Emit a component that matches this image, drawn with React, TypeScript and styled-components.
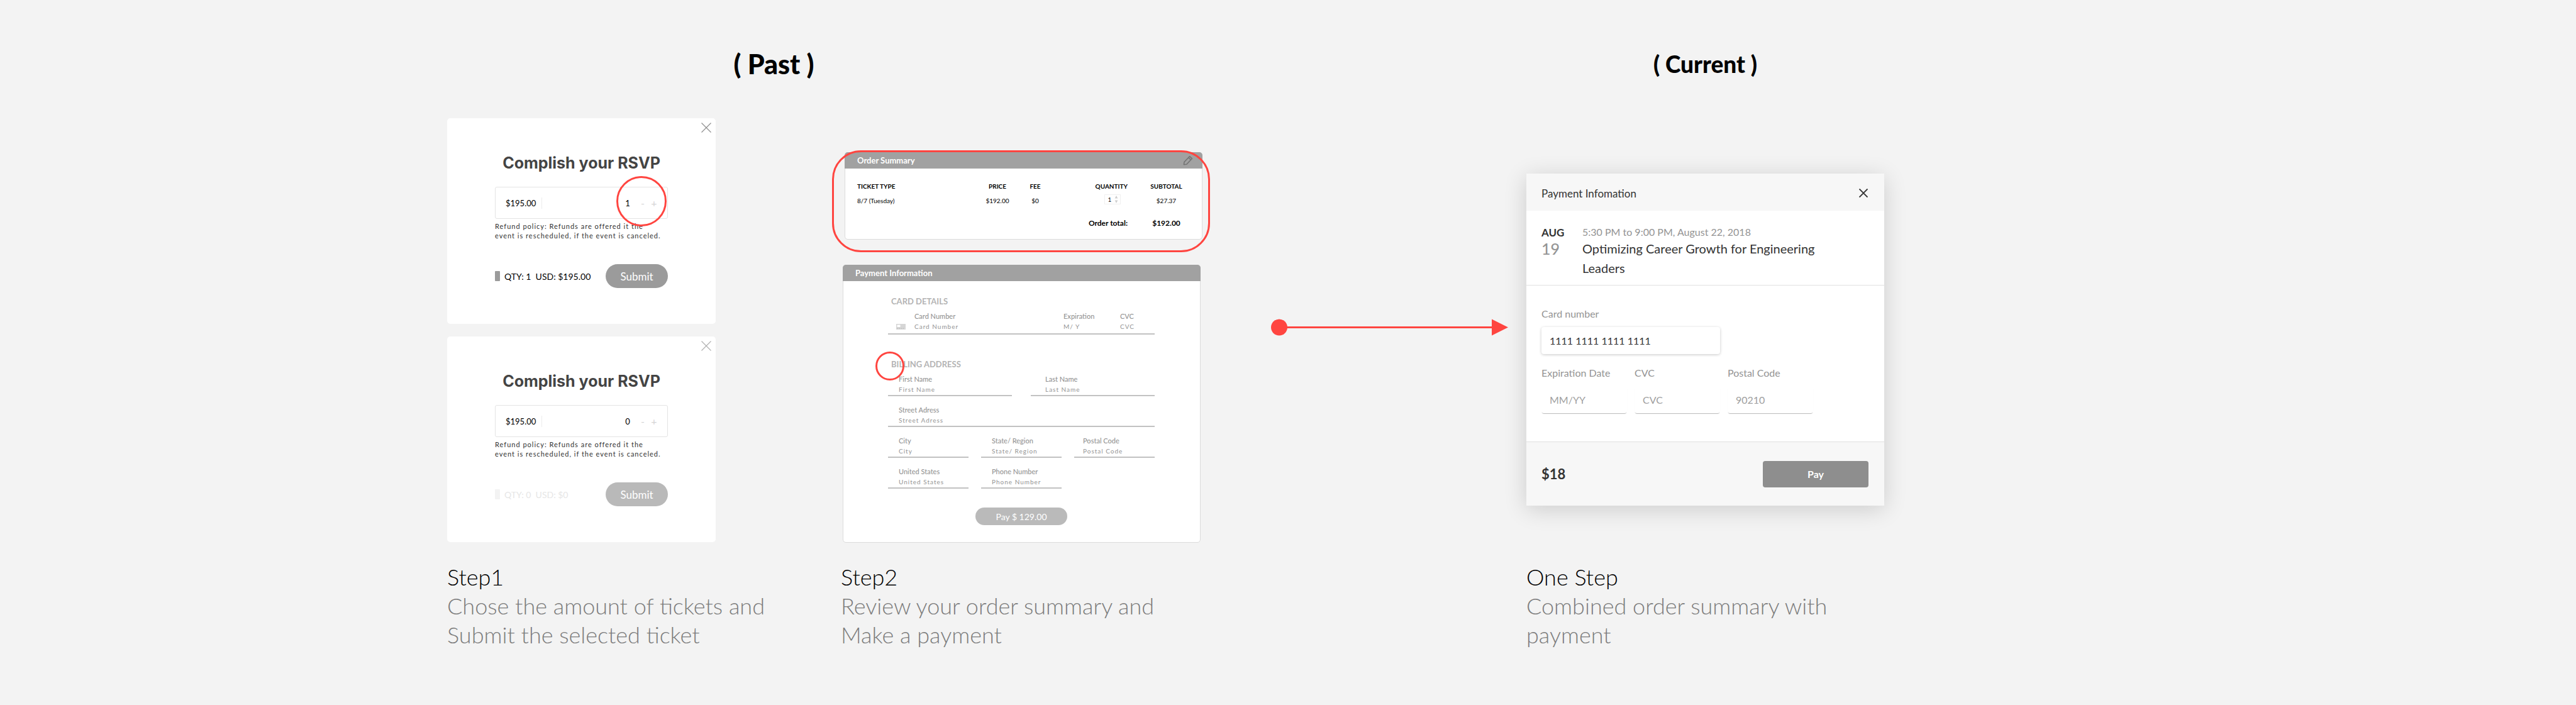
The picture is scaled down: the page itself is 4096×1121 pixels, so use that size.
import React, { useId } from "react";
import styled, { createGlobalStyle } from "styled-components";

const RED = "#ff4540";

const GlobalStyle = createGlobalStyle`
  *, *::before, *::after { box-sizing: border-box; }
  body {
    margin: 0;
    background: #f3f3f3;
    color: #000;
    font-family: Lato, "Open Sans", "Liberation Sans", sans-serif;
  }
  h1, h2, h3, p { margin: 0; font-size: inherit; font-weight: inherit; }
  button, input { font: inherit; letter-spacing: inherit; color: inherit; border: 0; padding: 0; margin: 0; background: none; }
  button { cursor: pointer; }
  input { min-width: 0; outline: none; }
  svg { display: block; }
`;

/* ---------- page grid ---------- */

const Page = styled.main`
  display: grid;
  grid-template-columns: 711fr 626px 575px 515px 569px 1100fr;
  grid-template-rows: 188px auto auto;
  min-height: 100vh;
  align-content: start;
`;

const PastHeading = styled.h1`
  grid-column: 2 / 4;
  padding: 80px 162px 0 0;
  font-size: 43px;
  line-height: 44px;
  font-weight: 900;
  text-align: center;
`;

const CurrentHeading = styled.h1`
  grid-column: 5;
  padding-top: 80px;
  font-size: 37px;
  line-height: 44px;
  font-weight: 900;
  text-align: center;
`;

const TicketColumn = styled.section`
  grid-column: 2;
  grid-row: 2;
  display: flex;
  flex-direction: column;
  align-items: flex-start;
  gap: 20px;
`;

const OrderColumn = styled.section`
  grid-column: 3;
  grid-row: 2;
  display: flex;
  flex-direction: column;
  gap: 40px;
  padding: 54px 0 0 3px;
`;

const ArrowColumn = styled.div`
  grid-column: 4;
  grid-row: 2;
  padding: 319px 29px 0 109px;
`;

const CurrentColumn = styled.section`
  grid-column: 5;
  grid-row: 2;
  padding-top: 88px;
`;

const Caption = styled.div<{ $column: number }>`
  grid-column: ${(p) => p.$column};
  grid-row: 3;
  padding-top: 31px;
  font-size: 36px;
  line-height: 46px;
  font-weight: 300;
  color: #7c7c7c;
  white-space: pre-line;
`;

const CaptionTitle = styled.h2`
  color: #000;
`;

/* ---------- RSVP card ---------- */

const RsvpCard = styled.article`
  position: relative;
  width: 427px;
  padding: 57px 76px;
  background: #fff;
  border-radius: 5px;
`;

const CornerButton = styled.button<{ $faint?: boolean }>`
  position: absolute;
  top: 7px;
  right: 7px;
  color: ${(p) => (p.$faint ? "#b0b0b0" : "#8f8f8f")};
`;

const RsvpTitle = styled.h2`
  font-family: Inter, "Open Sans", sans-serif;
  font-size: 25px;
  line-height: 28px;
  font-weight: 700;
  color: #444;
  text-align: center;
  white-space: nowrap;
`;

const QuantityBox = styled.div`
  display: flex;
  align-items: center;
  height: 51px;
  margin-top: 24px;
  padding: 0 12px 0 16px;
  border: 1px solid #e4e4e4;
  border-radius: 3px;
  font-size: 13px;
`;

const Price = styled.span`
  padding-right: 9px;
  line-height: 18px;
  border-right: 1px solid #ececec;
`;

const QuantityInput = styled.input`
  width: 30px;
  margin-left: auto;
  text-align: center;
`;

const StepButton = styled.button`
  width: 18px;
  color: #d4d4d4;
  font-size: 16px;
`;

const Refund = styled.p`
  margin: 4px -8px 0 0;
  font-size: 11px;
  line-height: 15px;
  letter-spacing: 1px;
  color: #333;
  white-space: pre-line;
`;

const RsvpFooter = styled.div`
  display: flex;
  align-items: center;
  margin-top: 38px;
`;

const Swatch = styled.span<{ $muted?: boolean }>`
  width: 8px;
  height: 16px;
  margin-right: 7px;
  border-radius: 1px;
  background: ${(p) => (p.$muted ? "#f3f3f3" : "#9b9b9b")};
`;

const Totals = styled.span<{ $muted?: boolean }>`
  font-size: 14px;
  white-space: pre;
  color: ${(p) => (p.$muted ? "#e6e6e6" : "#000")};
`;

const SubmitButton = styled.button<{ $muted?: boolean }>`
  width: 99px;
  height: 38px;
  margin-left: auto;
  border-radius: 19px;
  background: ${(p) => (p.$muted ? "#b9b9b9" : "#9b9b9b")};
  color: #fff;
  font-size: 17px;
`;

const Ring = styled.span<{ $top: number; $left: number; $size: number }>`
  position: absolute;
  top: ${(p) => p.$top}px;
  left: ${(p) => p.$left}px;
  width: ${(p) => p.$size}px;
  height: ${(p) => p.$size}px;
  border: 3px solid ${RED};
  border-radius: 50%;
  pointer-events: none;
`;

/* ---------- step 2 panels ---------- */

const Panel = styled.article`
  position: relative;
  width: 569px;
  background: #fff;
  border: 1px solid #dcdcdc;
  border-radius: 5px;
`;

const OrderPanel = styled(Panel)`
  align-self: flex-end;
  height: 139px;
`;

const PanelHeader = styled.header`
  display: flex;
  align-items: center;
  justify-content: space-between;
  height: 26px;
  margin: -1px -1px 0;
  padding: 0 15px 0 20px;
  border-radius: 5px 5px 0 0;
  background: #a1a1a1;
  color: #fff;
  font-size: 13px;
  font-weight: 700;
`;

const EditButton = styled.button`
  color: #747474;
`;

const Highlight = styled.span`
  position: absolute;
  inset: -4px -13px -21px -21px;
  border: 3px solid ${RED};
  border-radius: 46px;
  pointer-events: none;
`;

const OrderTable = styled.table`
  width: 519px;
  margin: 19px 0 0 19px;
  border-collapse: collapse;
  table-layout: fixed;
  font-size: 10px;
  text-align: center;

  th, td { padding: 0; font-weight: 400; }
  thead th { height: 17px; font-weight: 700; }
  tbody td { height: 30px; color: #000; }
  tfoot td { height: 41px; font-size: 12px; font-weight: 700; }
  tr > :first-child { text-align: left; }
  tr > .quantity { text-align: right; }
  tr > .subtotal { padding-left: 34px; }
`;

const Spinner = styled.label`
  display: inline-flex;
  align-items: center;
  width: 26px;
  height: 16px;
  margin: 0 11px 4px 0;
  border: 1px solid #f0f0f0;
  color: #222;
`;

const SpinnerInput = styled.input`
  width: 15px;
  text-align: center;
`;

const PaymentBody = styled.form`
  display: flex;
  flex-direction: column;
  padding: 24px 72px 27px 71px;
`;

const GroupTitle = styled.h3<{ $spaced?: boolean }>`
  margin: ${(p) => (p.$spaced ? "39px" : "0")} 0 8px;
  padding-left: 5px;
  font-size: 13px;
  line-height: 16px;
  font-weight: 700;
  color: #b4b4b4;
`;

const CardRow = styled.div`
  display: grid;
  grid-template-columns: 42px 237px 90px 1fr;
  padding-bottom: 3px;
  border-bottom: 2px solid #c2c2c2;
`;

const CardGlyph = styled.span`
  align-self: end;
  padding: 0 0 3px 13px;
`;

const FieldGrid = styled.div<{ $columns: number; $gap: number }>`
  display: grid;
  grid-template-columns: repeat(${(p) => p.$columns}, 1fr);
  column-gap: ${(p) => p.$gap}px;
  margin-bottom: 14px;
`;

const LineField = styled.div<{ $indent: number; $plain?: boolean }>`
  display: flex;
  flex-direction: column;
  min-width: 0;
  padding: 0 0 ${(p) => (p.$plain ? 0 : 1)}px ${(p) => p.$indent}px;
  border-bottom: ${(p) => (p.$plain ? "0" : "2px solid #c2c2c2")};
  line-height: 16px;
  color: #949494;

  label { font-size: 11px; font-weight: 500; }
  input { width: 100%; height: 16px; font-size: 10px; letter-spacing: 1px; }
`;

const PayPill = styled.button`
  align-self: center;
  width: 146px;
  height: 28px;
  margin-top: 16px;
  border-radius: 14px;
  background: #bababa;
  color: #fff;
  font-size: 14px;
`;

/* ---------- current dialog ---------- */

const Dialog = styled.article`
  background: #fff;
  border-radius: 2px;
  box-shadow: 0 6px 36px rgba(0, 0, 0, 0.16);
`;

const DialogHeader = styled.header`
  display: flex;
  align-items: center;
  justify-content: space-between;
  height: 59px;
  padding: 3px 26px 0 24px;
  background: #f7f7f7;
  color: #333;
  font-size: 17px;
`;

const EventInfo = styled.div`
  display: grid;
  grid-template-columns: 65px 1fr;
  padding: 23px 24px 11px;
  border-bottom: 1px solid #e0e0e0;
`;

const Month = styled.p`
  font-size: 17px;
  line-height: 24px;
  font-weight: 700;
  color: #333;
`;

const Day = styled.p`
  font-size: 25px;
  line-height: 26px;
  font-weight: 500;
  color: #949494;
`;

const EventTime = styled.p`
  font-size: 16px;
  line-height: 22px;
  color: #949494;
`;

const EventTitle = styled.h2`
  max-width: 400px;
  font-size: 20px;
  line-height: 31px;
  color: #333;
`;

const CardForm = styled.form`
  display: grid;
  grid-template-columns: repeat(3, 136px);
  gap: 20px 12px;
  padding: 35px 24px 45px;
`;

const BoxField = styled.div<{ $wide?: boolean }>`
  grid-column: ${(p) => (p.$wide ? "1 / -1" : "auto")};
  display: flex;
  flex-direction: column;
  gap: 11px;
  font-size: 16px;
  line-height: 20px;
  color: #949494;

  input {
    width: ${(p) => (p.$wide ? "284px" : "100%")};
    height: 43px;
    padding: 0 13px;
    border-radius: 4px;
    color: #333;
    box-shadow: ${(p) =>
      p.$wide
        ? "0 1px 4px rgba(0, 0, 0, 0.22)"
        : "0 2px 1px -1px rgba(0, 0, 0, 0.25), 0 1px 1px rgba(0, 0, 0, 0.04)"};
  }
  input::placeholder { color: #a0a0a0; opacity: 1; }
`;

const DialogFooter = styled.footer`
  display: flex;
  align-items: center;
  justify-content: space-between;
  height: 102px;
  padding: 0 25px 0 24px;
  border-top: 1px solid #e0e0e0;
  background: #f7f7f7;
`;

const Amount = styled.span`
  font-size: 22px;
  font-weight: 700;
  color: #333;
`;

const PayButton = styled.button`
  width: 168px;
  height: 42px;
  border-radius: 4px;
  background: #8e8e8e;
  color: #fff;
  font-size: 16px;
  font-weight: 700;
`;

/* ---------- drawings ---------- */

const Cross = ({ size, stroke }: { size: number; stroke: number }) => (
  <svg width={size} height={size} viewBox="0 0 16 16" stroke="currentColor" strokeWidth={stroke}>
    <path d="M.5.5l15 15M15.5.5l-15 15" />
  </svg>
);

const Pencil = () => (
  <svg width="16" height="16" viewBox="0 0 16 16" fill="none" stroke="currentColor" strokeWidth="1.6" strokeLinejoin="round">
    <path d="M1.4 14.6l.6-4 8.6-9 3.8 3.6-8.6 9z" />
    <path d="M8.8 3.6l3.6 3.4" />
  </svg>
);

const SpinArrows = () => (
  <svg width="6" height="12" viewBox="0 0 6 12" fill="#cfcfcf">
    <path d="M3 0l2.4 4.4H.6zM3 12L.6 7.6h4.8z" />
  </svg>
);

const CardIcon = () => (
  <svg width="15" height="9" viewBox="0 0 15 9">
    <rect width="15" height="9" fill="#d6d6d6" />
    <rect x="1.5" y="1.5" width="5" height="3.5" fill="#fff" />
    <path d="M1.5 7.2h11.5" stroke="#b5b5b5" strokeDasharray="1.5 1.5" />
  </svg>
);

const Arrow = () => (
  <svg width="100%" height="27" viewBox="0 0 377 27" fill={RED}>
    <circle cx="13" cy="13.5" r="13" />
    <rect x="20" y="12" width="334" height="3" />
    <path d="M351 .5l26 13-26 13z" />
  </svg>
);

/* ---------- parts ---------- */

type RsvpProps = { quantity: number; total: string; muted?: boolean; ringed?: boolean };

const Rsvp = ({ quantity, total, muted, ringed }: RsvpProps) => (
  <RsvpCard>
    <CornerButton $faint={muted} aria-label="Close">
      <Cross size={16} stroke={1.2} />
    </CornerButton>
    <RsvpTitle>Complish your RSVP</RsvpTitle>
    <QuantityBox>
      <Price>$195.00</Price>
      <QuantityInput aria-label="Quantity" defaultValue={quantity} />
      <StepButton aria-label="Fewer tickets">-</StepButton>
      <StepButton aria-label="More tickets">+</StepButton>
    </QuantityBox>
    <Refund>{"Refund policy: Refunds are offered it the\nevent is rescheduled, if the event is canceled."}</Refund>
    <RsvpFooter>
      <Swatch $muted={muted} />
      <Totals $muted={muted}>{`QTY: ${quantity}  USD: ${total}`}</Totals>
      <SubmitButton $muted={muted}>Submit</SubmitButton>
    </RsvpFooter>
    {ringed && <Ring $top={92} $left={269} $size={80} />}
  </RsvpCard>
);

type LineProps = { label: string; value?: string; indent?: number; plain?: boolean };

const Line = ({ label, value = label, indent = 17, plain }: LineProps) => {
  const id = useId();
  return (
    <LineField $indent={indent} $plain={plain}>
      <label htmlFor={id}>{label}</label>
      <input id={id} defaultValue={value} />
    </LineField>
  );
};

type BoxProps = { label: string; value?: string; placeholder?: string; wide?: boolean };

const Box = ({ label, value, placeholder, wide }: BoxProps) => {
  const id = useId();
  return (
    <BoxField $wide={wide}>
      <label htmlFor={id}>{label}</label>
      <input id={id} defaultValue={value} placeholder={placeholder} />
    </BoxField>
  );
};

const OrderSummary = () => (
  <OrderPanel>
    <PanelHeader>
      <h2>Order Summary</h2>
      <EditButton aria-label="Edit order">
        <Pencil />
      </EditButton>
    </PanelHeader>
    <OrderTable>
      <colgroup>
        <col style={{ width: 193 }} />
        <col style={{ width: 60 }} />
        <col style={{ width: 60 }} />
        <col style={{ width: 117 }} />
        <col style={{ width: 89 }} />
      </colgroup>
      <thead>
        <tr>
          <th>TICKET TYPE</th>
          <th>PRICE</th>
          <th>FEE</th>
          <th className="quantity">QUANTITY</th>
          <th className="subtotal">SUBTOTAL</th>
        </tr>
      </thead>
      <tbody>
        <tr>
          <td>8/7 (Tuesday)</td>
          <td>$192.00</td>
          <td>$0</td>
          <td className="quantity">
            <Spinner>
              <SpinnerInput aria-label="Ticket quantity" defaultValue="1" />
              <SpinArrows />
            </Spinner>
          </td>
          <td className="subtotal">$27.37</td>
        </tr>
      </tbody>
      <tfoot>
        <tr>
          <td colSpan={3} />
          <td className="quantity">Order total:</td>
          <td className="subtotal">$192.00</td>
        </tr>
      </tfoot>
    </OrderTable>
    <Highlight />
  </OrderPanel>
);

const PaymentInformation = () => (
  <Panel>
    <PanelHeader>
      <h2>Payment Information</h2>
    </PanelHeader>
    <PaymentBody>
      <GroupTitle>CARD DETAILS</GroupTitle>
      <CardRow>
        <CardGlyph>
          <CardIcon />
        </CardGlyph>
        <Line label="Card Number" indent={0} plain />
        <Line label="Expiration" value="M/ Y" indent={0} plain />
        <Line label="CVC" indent={0} plain />
      </CardRow>
      <GroupTitle $spaced>BILLING ADDRESS</GroupTitle>
      <FieldGrid $columns={2} $gap={30}>
        <Line label="First Name" />
        <Line label="Last Name" indent={23} />
      </FieldGrid>
      <FieldGrid $columns={1} $gap={0}>
        <Line label="Street Adress" />
      </FieldGrid>
      <FieldGrid $columns={3} $gap={20}>
        <Line label="City" />
        <Line label="State/ Region" />
        <Line label="Postal Code" indent={14} />
      </FieldGrid>
      <FieldGrid $columns={3} $gap={20}>
        <Line label="United States" />
        <Line label="Phone Number" />
      </FieldGrid>
      <PayPill type="button">Pay $ 129.00</PayPill>
    </PaymentBody>
    <Ring $top={137} $left={51} $size={46} />
  </Panel>
);

const PaymentDialog = () => (
  <Dialog>
    <DialogHeader>
      <h2>Payment Infomation</h2>
      <button aria-label="Close">
        <Cross size={14} stroke={2.2} />
      </button>
    </DialogHeader>
    <EventInfo>
      <div>
        <Month>AUG</Month>
        <Day>19</Day>
      </div>
      <div>
        <EventTime>5:30 PM to 9:00 PM, August 22, 2018</EventTime>
        <EventTitle>Optimizing Career Growth for Engineering Leaders</EventTitle>
      </div>
    </EventInfo>
    <CardForm>
      <Box label="Card number" value="1111 1111 1111 1111" wide />
      <Box label="Expiration Date" placeholder="MM/YY" />
      <Box label="CVC" placeholder="CVC" />
      <Box label="Postal Code" placeholder="90210" />
    </CardForm>
    <DialogFooter>
      <Amount>$18</Amount>
      <PayButton>Pay</PayButton>
    </DialogFooter>
  </Dialog>
);

export default function App() {
  return (
    <>
      <GlobalStyle />
      <Page>
        <PastHeading>( Past )</PastHeading>
        <CurrentHeading>( Current )</CurrentHeading>

        <TicketColumn>
          <Rsvp quantity={1} total="$195.00" ringed />
          <Rsvp quantity={0} total="$0" muted />
        </TicketColumn>
        <OrderColumn>
          <OrderSummary />
          <PaymentInformation />
        </OrderColumn>
        <ArrowColumn>
          <Arrow />
        </ArrowColumn>
        <CurrentColumn>
          <PaymentDialog />
        </CurrentColumn>

        <Caption $column={2}>
          <CaptionTitle>Step1</CaptionTitle>
          {"Chose the amount of tickets and\nSubmit the selected ticket"}
        </Caption>
        <Caption $column={3}>
          <CaptionTitle>Step2</CaptionTitle>
          {"Review your order summary and\nMake a payment"}
        </Caption>
        <Caption $column={5}>
          <CaptionTitle>One Step</CaptionTitle>
          {"Combined order summary with\npayment"}
        </Caption>
      </Page>
    </>
  );
}
